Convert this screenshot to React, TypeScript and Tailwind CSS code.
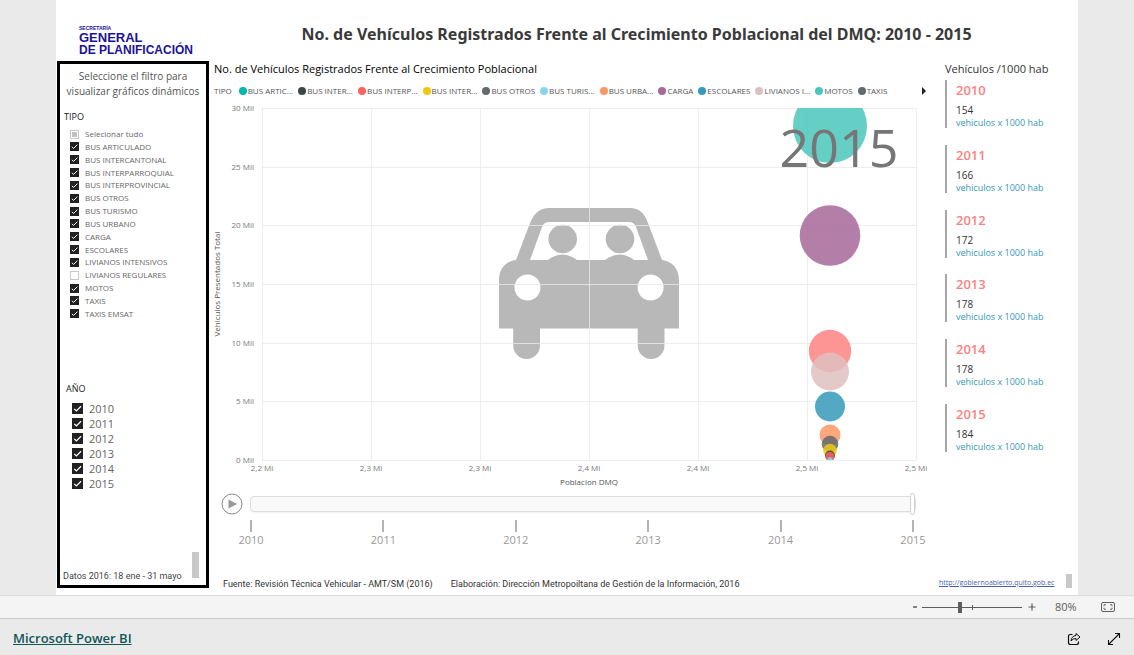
import React, { useState } from 'react'

const tipos = [
  'BUS ARTICULADO',
  'BUS INTERCANTONAL',
  'BUS INTERPARROQUIAL',
  'BUS INTERPROVINCIAL',
  'BUS OTROS',
  'BUS TURISMO',
  'BUS URBANO',
  'CARGA',
  'ESCOLARES',
  'LIVIANOS INTENSIVOS',
  'LIVIANOS REGULARES',
  'MOTOS',
  'TAXIS',
  'TAXIS EMSAT',
]

const years = ['2010', '2011', '2012', '2013', '2014', '2015']

const legend = [
  { label: 'BUS ARTIC...', color: 'bg-[#01b8aa]' },
  { label: 'BUS INTER...', color: 'bg-[#374649]' },
  { label: 'BUS INTERP...', color: 'bg-[#fd625e]' },
  { label: 'BUS INTER...', color: 'bg-[#f2c80f]' },
  { label: 'BUS OTROS', color: 'bg-[#5f6b6d]' },
  { label: 'BUS TURIS...', color: 'bg-[#8ad4eb]' },
  { label: 'BUS URBA...', color: 'bg-[#fe9666]' },
  { label: 'CARGA', color: 'bg-[#a66999]' },
  { label: 'ESCOLARES', color: 'bg-[#3599b8]' },
  { label: 'LIVIANOS I...', color: 'bg-[#dfbfbf]' },
  { label: 'MOTOS', color: 'bg-[#4ac5bb]' },
  { label: 'TAXIS', color: 'bg-[#5f6b6d]' },
]

const cards = [
  { year: '2010', value: 154 },
  { year: '2011', value: 166 },
  { year: '2012', value: 172 },
  { year: '2013', value: 178 },
  { year: '2014', value: 178 },
  { year: '2015', value: 184 },
]

// plot area inside the chart's view box
const plot = { left: 50, right: 704, top: 3, bottom: 355 }

const xLabels = ['2,2 Mi', '2,3 Mi', '2,3 Mi', '2,4 Mi', '2,4 Mi', '2,5 Mi', '2,5 Mi']
const yLabels = ['0 Mil', '5 Mil', '10 Mil', '15 Mil', '20 Mil', '25 Mil', '30 Mil']

const bubbles = [
  { cy: 21, r: 37, fill: '#4ac5bb' },
  { cy: 130.5, r: 30.3, fill: '#a66999' },
  { cy: 246, r: 21.2, fill: '#fb8281' },
  { cy: 266.5, r: 19, fill: '#dfbfbf' },
  { cy: 301.5, r: 15, fill: '#3599b8' },
  { cy: 330, r: 10.5, fill: '#fe9666' },
  { cy: 339, r: 8.3, fill: '#5f6b6d' },
  { cy: 345.5, r: 6.8, fill: '#f2c80f' },
  { cy: 350.5, r: 5, fill: '#374649' },
  { cy: 351.5, r: 4.5, fill: '#fd625e' },
  { cy: 354.5, r: 2.5, fill: '#8ad4eb' },
]

type CheckProps = {
  id: string
  label: string
  initial?: boolean
  partial?: boolean
  large?: boolean
}

const Check = ({ id, label, initial = true, partial = false, large = false }: CheckProps) => {
  const [checked, setChecked] = useState(initial)
  const size = large ? 'size-[11px]' : 'size-[9px]'

  return <div className={`flex items-center gap-[6px] ${large ? 'h-[15px]' : 'h-3'}`}>
    <span className="grid">
      <input
        id={id}
        type="checkbox"
        checked={checked}
        onChange={() => setChecked(!checked)}
        className={`${size} col-start-1 row-start-1 appearance-none border border-[#c8c8c8] bg-white checked:border-[#212121] checked:bg-[#212121]`}
      />
      {
        checked &&
        <svg viewBox="0 0 9 9" className={`${size} pointer-events-none col-start-1 row-start-1`}>
          <path d="M1.8 4.8 3.6 6.4 7.4 2.7" fill="none" stroke="#fff" strokeWidth="1" />
        </svg>
      }
      {
        partial && !checked &&
        <svg viewBox="0 0 9 9" className={`${size} pointer-events-none col-start-1 row-start-1`}>
          <rect x="2" y="2" width="5" height="5" fill="#c0c0c0" />
        </svg>
      }
    </span>
    <label htmlFor={id} className={`whitespace-nowrap text-[#666] ${large ? 'text-[11px]/[15px]' : 'text-[8px]/3'}`}>{label}</label>
  </div>
}

const Car = () => (
  <g transform="translate(287 103)" fill="#b8b8b8">
    <path
      fillRule="evenodd"
      d="M0 120.5V72C0 61 7 53 17 52L31 15Q37 0 50 0H131Q144 0 149 15L163 52C173 53 180 61 180 72V120.5H165.500V137.500a13.400 13.400 0 0 1-26.800 0V120.500H41V137.500a13.400 13.400 0 0 1-26.800 0V120.500ZM31 52H49Q63 41 78 52H106Q121 41 135 52H149L137 19Q135 14 130 14H50Q45 14 43 19ZM15.500 79.500a13 13 0 1 0 26 0a13 13 0 1 0-26 0M138.600 79.500a13 13 0 1 0 26 0a13 13 0 1 0-26 0"
    />
    <circle cx="63.7" cy="31" r="14.300" />
    <circle cx="121" cy="31" r="14.300" />
  </g>
)

const BubbleChart = () => {
  const stepX = (plot.right - plot.left) / 6
  const stepY = (plot.bottom - plot.top) / 6

  return <svg viewBox="0 0 720 385" className="block w-full overflow-visible text-[8px]" role="img" aria-label="Vehiculos Presentados Total por Poblacion DMQ">
    <defs>
      <clipPath id="plot">
        <rect x={plot.left} y={plot.top} width={plot.right - plot.left} height={plot.bottom - plot.top} />
      </clipPath>
    </defs>
    <Car />
    <g stroke="#e8e8e8" strokeOpacity="0.8">
      {yLabels.map((_, i) => {
        const y = Math.round(plot.bottom - i * stepY) + 0.5
        return <line key={i} x1={plot.left} x2={plot.right} y1={y} y2={y} />
      })}
      {xLabels.map((_, i) => {
        const x = plot.left + i * stepX + 0.5
        return <line key={i} x1={x} x2={x} y1={plot.top} y2={plot.bottom} />
      })}
    </g>
    <g clipPath="url(#plot)" fillOpacity="0.85">
      {bubbles.map(({ cy, r, fill }) => <circle key={cy} cx="618" cy={cy} r={r} fill={fill} />)}
    </g>
    <g fill="#777">
      {yLabels.map((label, i) => (
        <text key={label} x={plot.left - 8} y={plot.bottom - i * stepY + 3} textAnchor="end">{label}</text>
      ))}
      {xLabels.map((label, i) => (
        <text key={i} x={plot.left + i * stepX} y={plot.bottom + 11} textAnchor="middle">{label}</text>
      ))}
    </g>
    <g fill="#555">
      <text x="377" y="380" textAnchor="middle">Poblacion DMQ</text>
      <text transform="translate(8 179) rotate(-90)" textAnchor="middle">Vehiculos Presentados Total</text>
    </g>
    <text x="627" y="62" textAnchor="middle" fill="#767676" className="text-[52px]">2015</text>
  </svg>
}

const Player = () => (
  <div className="mt-0.5 pl-[9px]">
    <div className="flex items-center gap-[7px]">
      <button type="button" aria-label="Reproducir" className="size-[22px] shrink-0">
        <svg viewBox="0 0 22 22" className="size-full">
          <circle cx="11" cy="11" r="10" fill="none" stroke="#888" strokeWidth="1" />
          <path d="M7.500 6.500 16 11 7.500 15.500Z" fill="#999" />
        </svg>
      </button>
      <input
        type="range"
        min={0}
        max={5}
        defaultValue={5}
        aria-label="Año"
        className="mr-4 h-6 min-w-0 flex-1 appearance-none bg-transparent [&::-webkit-slider-runnable-track]:h-4 [&::-webkit-slider-runnable-track]:rounded-sm [&::-webkit-slider-runnable-track]:border [&::-webkit-slider-runnable-track]:border-[#dedede] [&::-webkit-slider-runnable-track]:bg-[#fafafa] [&::-webkit-slider-runnable-track]:shadow-xs [&::-webkit-slider-thumb]:-mt-1 [&::-webkit-slider-thumb]:h-[22px] [&::-webkit-slider-thumb]:w-[5px] [&::-webkit-slider-thumb]:appearance-none [&::-webkit-slider-thumb]:rounded-sm [&::-webkit-slider-thumb]:border [&::-webkit-slider-thumb]:border-[#d0d0d0] [&::-webkit-slider-thumb]:bg-white"
      />
    </div>
    <div className="mt-1 mr-[3px] ml-[14px] flex justify-between">
      {years.map((year) => (
        <div key={year} className="flex w-8 flex-col items-center">
          <span className="h-3 w-0.5 bg-[#b3b3b3]" />
          <span className="text-[11px]/4 text-[#999]">{year}</span>
        </div>
      ))}
    </div>
  </div>
)

const Filters = () => (
  <aside className="ml-px flex w-[152px] shrink-0 flex-col border-[3px] border-black">
    <p className="mt-[5px] text-center text-[10px]/[15px] text-[#555]">
      Seleccione el filtro para<br />visualizar gráficos dinámicos
    </p>
    <fieldset className="mt-[10px] pl-1">
      <legend className="text-[9px]/4 text-[#222]">TIPO</legend>
      <div className="mt-[3px] flex h-48 flex-col justify-between pl-[6px]">
        <Check id="tipo-todo" label="Selecionar tudo" initial={false} partial />
        {tipos.map((tipo) => (
          <Check key={tipo} id={tipo} label={tipo} initial={tipo !== 'LIVIANOS REGULARES'} />
        ))}
      </div>
    </fieldset>
    <fieldset className="mt-[61px] pl-[6px]">
      <legend className="text-[9px]/4 text-[#222]">AÑO</legend>
      <div className="mt-1 pl-[6px]">
        {years.map((year) => <Check key={year} id={year} label={year} large />)}
      </div>
    </fieldset>
    <div className="mt-auto flex items-end justify-between pr-[7px] pb-[7px] pl-[3px]">
      <p className="-mb-[6px] font-['Roboto',sans-serif] text-[9px]/4 whitespace-nowrap text-[#444]">Datos 2016: 18 ene - 31 mayo</p>
      <span className="h-[26px] w-[7px] bg-[#c8c8c8]" />
    </div>
  </aside>
)

const Rates = () => (
  <aside className="ml-[13px] flex w-[133px] shrink-0 flex-col">
    <h3 className="h-[19px] text-[11px]/4 text-[#333]">Vehículos /1000 hab</h3>
    <div className="flex h-[372px] flex-col justify-between">
      {cards.map(({ year, value }) => (
        <div key={year} className="h-12 border-l-2 border-[#a6a6a6] pl-[9px]">
          <p className="text-[13px]/5 font-semibold text-[#fb8281]">{year}</p>
          <p className="mt-0.5 text-[10px]/4 text-[#333]">{value}</p>
          <p className="text-[9px]/[10px] whitespace-nowrap text-[#3599b8]">vehiculos x 1000 hab</p>
        </div>
      ))}
    </div>
    <div className="mt-auto -ml-[6px] flex items-end justify-between pr-[6px]">
      <a href="http://gobiernoabierto.quito.gob.ec" className="text-[7px]/[10px] whitespace-nowrap text-[#4a5fb0] underline">http://gobiernoabierto.quito.gob.ec</a>
      <span className="h-[14px] w-[6px] bg-[#c8c8c8]" />
    </div>
  </aside>
)

const StatusBar = () => (
  <div className="flex h-6 items-center justify-end border-t border-b border-t-[#dadada] border-b-[#c8c8c8] bg-[#f4f4f4] pr-[19px] text-[#605e5c]">
    <button type="button" aria-label="Reducir" className="w-[14px]">
      <svg viewBox="0 0 14 14" className="size-[14px]"><path d="M5 7H9" stroke="currentColor" strokeWidth="1.5" /></svg>
    </button>
    <div className="relative flex h-4 items-center">
      <input
        type="range"
        min={0}
        max={100}
        defaultValue={38}
        aria-label="Zoom"
        className="h-4 w-[100px] appearance-none bg-transparent [&::-webkit-slider-runnable-track]:h-px [&::-webkit-slider-runnable-track]:bg-[#605e5c] [&::-webkit-slider-thumb]:-mt-[5px] [&::-webkit-slider-thumb]:h-[11px] [&::-webkit-slider-thumb]:w-1 [&::-webkit-slider-thumb]:appearance-none [&::-webkit-slider-thumb]:bg-[#605e5c]"
      />
      <span className="absolute left-1/2 h-[5px] w-px bg-[#605e5c]" />
    </div>
    <button type="button" aria-label="Ampliar" className="ml-[3px]">
      <svg viewBox="0 0 14 14" className="size-[14px]"><path d="M3.500 7H10.500M7 3.500V10.500" stroke="currentColor" strokeWidth="1.200" /></svg>
    </button>
    <span className="ml-4 w-[46px] text-[11px]">80%</span>
    <button type="button" aria-label="Ajustar a la página">
      <svg viewBox="0 0 14 10" className="h-[10px] w-[14px]" fill="none" stroke="currentColor">
        <rect x=".5" y=".5" width="13" height="9" rx="1.500" />
        <path d="M5 2.700H3V4.300M9 2.700H11V4.300M5 7.300H3V5.700M9 7.300H11V5.700" strokeWidth=".9" />
      </svg>
    </button>
  </div>
)

const Footer = () => (
  <footer className="flex h-9 items-center justify-between px-[13px] pt-1">
    <a href="https://powerbi.microsoft.com" className="text-[13px] font-semibold text-[#0f5757] underline">Microsoft Power BI</a>
    <div className="flex items-center gap-[26px] text-[#111]">
      <button type="button" aria-label="Compartir">
        <svg viewBox="0 0 14 14" className="size-[14px]" fill="none" stroke="currentColor" strokeLinejoin="round">
          <path d="M5.500 2.500H3.500Q1.500 2.500 1.500 4.500V10.500Q1.500 12.500 3.500 12.500H9.500Q11.500 12.500 11.500 10.500V9.500" strokeWidth="1.200" />
          <path d="M9 1.500 13 5 9 8.500V6.500Q6 6.300 4 9Q4.500 4 9 3.500Z" />
        </svg>
      </button>
      <button type="button" aria-label="Pantalla completa">
        <svg viewBox="0 0 14 14" className="size-[14px]" fill="none" stroke="currentColor" strokeWidth="1.100">
          <path d="M1.500 12.500 12.500 1.500M8 1.500H12.500V6M1.500 8V12.500H6" />
        </svg>
      </button>
    </div>
  </footer>
)

export default function App() {
  return <div className="flex min-h-screen flex-col bg-[#eaeaea] font-['Open_Sans','Noto_Sans',sans-serif]">
    <main className="flex flex-1 flex-col px-14">
      <div className="flex flex-1 flex-col bg-white">
        <header className="flex h-[61px] shrink-0 items-end">
          <div className="ml-[23px] w-[116px] shrink-0 pb-1 font-['Liberation_Sans',Arial,sans-serif] font-bold whitespace-nowrap text-[#1b1296]">
            <p className="text-[5px]/[5px]">SECRETARÍA</p>
            <p className="text-[13px]/[13px]">GENERAL</p>
            <p className="text-[12px]/[13px]">DE PLANIFICACIÓN</p>
          </div>
          <h1 className="flex-1 pb-[15px] text-center font-['Noto_Sans',sans-serif] text-[16px]/6 font-bold text-[#3a3a3a]">
            No. de Vehículos Registrados Frente al Crecimiento Poblacional del DMQ: 2010 - 2015
          </h1>
        </header>
        <div className="mb-[7px] flex flex-1">
          <Filters />
          <section className="ml-[3px] flex min-w-0 flex-1 flex-col">
            <h2 className="pl-0.5 text-[11px]/4 text-black">No. de Vehículos Registrados Frente al Crecimiento Poblacional</h2>
            <div className="mt-[7px] mb-2 flex h-[13px] items-center pl-0.5 text-[8px]/[13px] whitespace-nowrap text-[#555]">
              <span className="mr-[7px]">TIPO</span>
              <ul className="flex gap-[5px]">
                {legend.map(({ label, color }, i) => (
                  <li key={i} className="flex items-center gap-px">
                    <span className={`size-2 rounded-full ${color}`} />
                    {label}
                  </li>
                ))}
              </ul>
              <button type="button" aria-label="Siguiente" className="mr-[6px] ml-auto">
                <svg viewBox="0 0 4 8" className="h-2 w-1"><path d="M0 0 4 4 0 8Z" fill="#222" /></svg>
              </button>
            </div>
            <BubbleChart />
            <Player />
            <p className="mt-auto -mb-0.5 flex gap-[18px] pl-[11px] font-['Roboto',sans-serif] text-[9px]/3 whitespace-nowrap text-[#333]">
              <span>Fuente: Revisión Técnica Vehicular - AMT/SM (2016)</span>
              <span>Elaboración: Dirección Metropoiltana de Gestión de la Información, 2016</span>
            </p>
          </section>
          <Rates />
        </div>
      </div>
    </main>
    <StatusBar />
    <Footer />
  </div>
}
